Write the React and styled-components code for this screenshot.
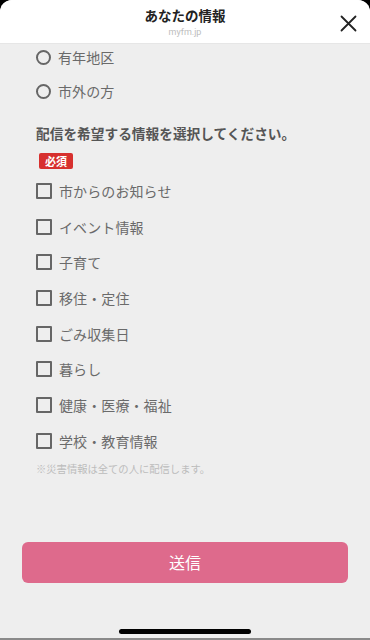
import React from "react";
import styled, { createGlobalStyle } from "styled-components";

const Global = createGlobalStyle`
  html, body { margin: 0; padding: 0; background: #000; }
  body { font-family: "Noto Sans CJK JP", "Noto Sans", sans-serif; }
  * { box-sizing: border-box; }
`;

const Sheet = styled.div`
  width: 370px;
  height: 640px;
  background: #eeeeee;
  border-radius: 12px 12px 0 0;
  overflow: hidden;
  display: flex;
  flex-direction: column;
  position: relative;
`;

const Header = styled.header`
  height: 44px;
  background: #ffffff;
  border-bottom: 1px solid #e6e6e6;
  display: flex;
  flex-direction: column;
  align-items: center;
  justify-content: center;
  position: relative;
  flex-shrink: 0;
`;

const Title = styled.div`
  font-size: 13.5px;
  font-weight: 700;
  color: #222;
  line-height: 18px;
  margin-top: 0px;
`;

const Sub = styled.div`
  font-family: "Roboto", "Noto Sans", sans-serif;
  font-size: 9px;
  color: #bdbdbd;
  line-height: 12px;
  margin-top: 2px;
`;

const Close = styled.button`
  position: absolute;
  right: 12px;
  top: 13px;
  width: 20px;
  height: 20px;
  padding: 0;
  border: none;
  background: none;
  display: flex;
  align-items: center;
  justify-content: center;
`;

const Content = styled.main`
  padding: 0 22px 0 36px;
  display: flex;
  flex-direction: column;
  flex: 1;
`;

const List = styled.div`
  display: flex;
  flex-direction: column;
  gap: ${(p) => p.$gap}px;
  margin-top: ${(p) => p.$top || 0}px;
`;

const Row = styled.label`
  display: flex;
  align-items: center;
  height: ${(p) => p.$h}px;
  gap: 7px;
  font-size: 14px;
  font-weight: 400;
  color: #6a6a6a;
  letter-spacing: 0.1px;
`;

const Radio = styled.span`
  width: 15px;
  height: 15px;
  border: 2px solid #666;
  border-radius: 50%;
  flex-shrink: 0;
`;

const Check = styled.span`
  width: 16px;
  height: 16px;
  border: 2px solid #666;
  border-radius: 1px;
  flex-shrink: 0;
`;

const Heading = styled.div`
  margin-top: 19px;
  font-size: 13.7px;
  font-weight: 700;
  color: #555;
  line-height: 20px;
`;

const Badge = styled.span`
  align-self: flex-start;
  margin-top: 10px;
  margin-left: 3px;
  height: 16px;
  padding: 0 6px;
  background: #d7302e;
  color: #fff;
  font-size: 11px;
  font-weight: 700;
  line-height: 16px;
  border-radius: 2px;
`;

const Note = styled.div`
  margin-top: 9px;
  font-size: 10.3px;
  color: #bcbcbc;
  line-height: 14px;
`;

const Submit = styled.button`
  margin: 66px 0 0 -14px;
  height: 41px;
  width: 326px;
  background: #de6a8c;
  border: none;
  border-radius: 6px;
  color: #fff;
  font-family: "Noto Sans CJK JP", sans-serif;
  font-size: 16px;
  font-weight: 400;
`;

const HomeBar = styled.div`
  position: absolute;
  left: 119px;
  bottom: 6px;
  width: 132px;
  height: 5px;
  border-radius: 3px;
  background: #000;
`;

const BottomLine = styled.div`
  position: absolute;
  left: 0;
  right: 0;
  bottom: 0;
  height: 2px;
  background: #8a8a8a;
`;

const radios = ["有年地区", "市外の方"];
const checks = [
  "市からのお知らせ",
  "イベント情報",
  "子育て",
  "移住・定住",
  "ごみ収集日",
  "暮らし",
  "健康・医療・福祉",
  "学校・教育情報",
];

export default function App() {
  return (
    <>
      <Global />
      <Sheet>
        <Header>
          <Title>あなたの情報</Title>
          <Sub>myfm.jp</Sub>
          <Close aria-label="close">
            <svg width="17" height="17" viewBox="0 0 17 17">
              <path d="M1.5 1.5L15.5 15.5M15.5 1.5L1.5 15.5" stroke="#222" strokeWidth="1.8" strokeLinecap="round" />
            </svg>
          </Close>
        </Header>
        <Content>
          <List $gap={8}>
            {radios.map((r) => (
              <Row key={r} $h={26}>
                <Radio />
                {r}
              </Row>
            ))}
          </List>
          <Heading>配信を希望する情報を選択してください。</Heading>
          <Badge>必須</Badge>
          <List $gap={11.7} $top={10}>
            {checks.map((c) => (
              <Row key={c} $h={24}>
                <Check />
                {c}
              </Row>
            ))}
          </List>
          <Note>※災害情報は全ての人に配信します。</Note>
          <Submit>送信</Submit>
        </Content>
        <HomeBar />
        <BottomLine />
      </Sheet>
    </>
  );
}
